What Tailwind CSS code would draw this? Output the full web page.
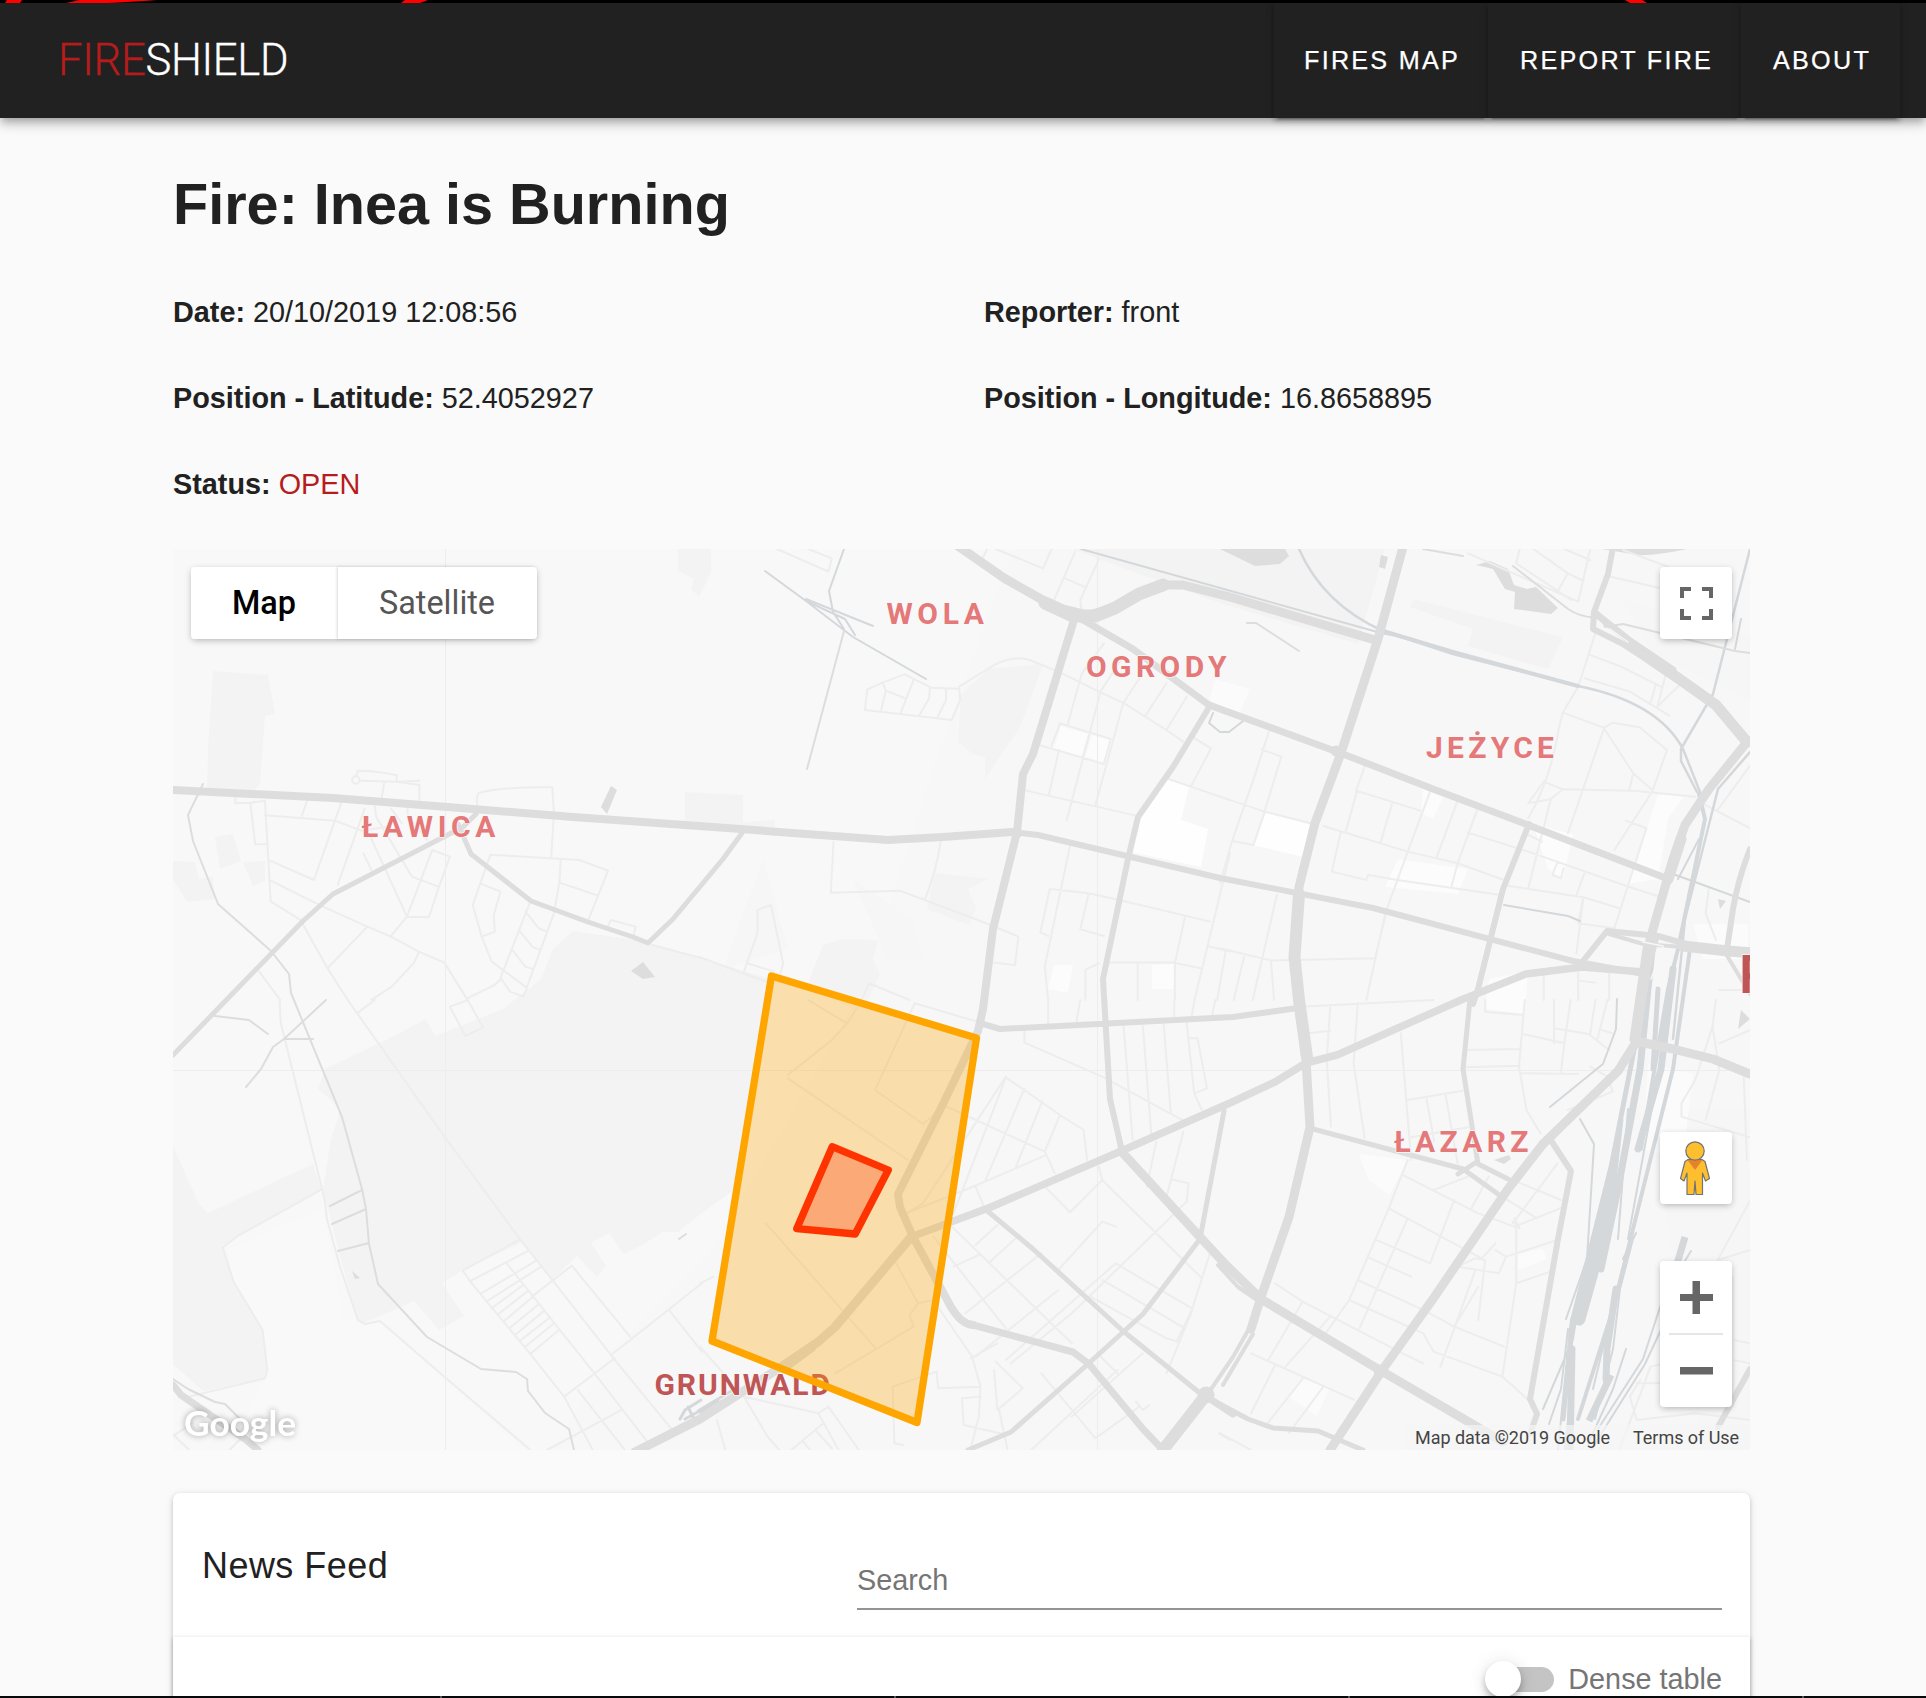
<!DOCTYPE html>
<html lang="en">
<head>
<meta charset="utf-8">
<title>Fireshield</title>
<script src="https://cdn.jsdelivr.net/npm/@tailwindcss/browser@4"></script>
</head>
<body>
<div class="relative w-[1926px] h-[1698px] overflow-hidden bg-[#fafafa] text-[#212121] font-['Liberation_Sans',Arial,sans-serif] flex flex-col">
<div class="h-[3px] shrink-0 bg-black relative z-20">
  <svg class="block" width="1926" height="3" fill="#f00"><path d="M7 0H22L20 3H5ZM80 0H157Q130 2 108 3H66ZM405 0H428L420 3H401ZM1625 0H1642L1647 3H1630Z"/></svg>
</div>
<header class="h-[115px] shrink-0 bg-[#212121] relative z-10 flex items-stretch justify-between pl-[58px] pr-[26px] shadow-[0_4px_7px_-2px_rgba(0,0,0,0.2),0_7px_9px_rgba(0,0,0,0.14),0_2px_18px_rgba(0,0,0,0.12)]">
  <div class="font-[Roboto] font-light text-[43.6px] leading-[115px] tracking-[-0.3px] [-webkit-text-stroke:0.35px_currentColor]"><span class="text-[#b71c1c]">FIRE</span><span class="text-white">SHIELD</span></div>
  <nav class="flex text-white text-[25.2px] leading-[114px] tracking-[2.25px] [-webkit-text-stroke:0.25px_currentColor]">
    <a class="w-[214px] pl-[30px] whitespace-nowrap bg-[#212121] shadow-[0_5px_2px_-4px_rgba(0,0,0,0.3),0_3px_4px_rgba(0,0,0,0.2),0_1px_9px_rgba(0,0,0,0.12)]">FIRES MAP</a>
    <a class="w-[253px] pl-[32px] whitespace-nowrap bg-[#212121] shadow-[0_5px_2px_-4px_rgba(0,0,0,0.3),0_3px_4px_rgba(0,0,0,0.2),0_1px_9px_rgba(0,0,0,0.12)]">REPORT FIRE</a>
    <a class="w-[159px] pl-[32px] whitespace-nowrap bg-[#212121] shadow-[0_5px_2px_-4px_rgba(0,0,0,0.3),0_3px_4px_rgba(0,0,0,0.2),0_1px_9px_rgba(0,0,0,0.12)]">ABOUT</a>
  </nav>
</header>
<main class="ml-[173px] w-[1577px] flex flex-col">
  <h1 class="mt-[51px] h-[70px] text-[57.6px] leading-[70px] font-bold">Fire: Inea is Burning</h1>
  <dl class="mt-[30px] h-[280px] grid grid-cols-[811px_1fr] auto-rows-[86px] text-[28.8px] leading-[86px] whitespace-nowrap">
    <div><b>Date:</b> 20/10/2019 12:08:56</div><div><b>Reporter:</b> front</div>
    <div><b>Position - Latitude:</b> 52.4052927</div><div><b>Position - Longitude:</b> 16.8658895</div>
    <div><b>Status:</b> <span class="text-[#b71c1c]">OPEN</span></div>
  </dl>
  <section class="relative h-[901px] overflow-hidden bg-[#f8f8f8] font-[Roboto]">
    <svg class="block" width="1577" height="901" viewBox="0 0 1577 901" fill="none" stroke-linejoin="round" stroke-linecap="round">
      <!-- built-up ground -->
      <path fill="#f7f7f7" d="M840 0H1577V901H380L440 800L540 700L690 440L760 220Z"/>
      <path fill="#f9f9f9" d="M55 700L150 660L170 770L205 772L350 901H60L90 830L95 800L60 740Z"/>
      <!-- parks -->
      <g fill="#f3f3f3">
        <path d="M40 122L95 126L102 165L92 167L87 235L80 243H34L35 200Z"/>
        <path d="M42 288L60 285L68 312L47 320ZM0 312L22 313L26 330L40 328L42 350L14 353L0 330ZM70 313L92 312V332L80 337Z"/>
        <path d="M505 0H538V24L526 48L518 40L521 30L505 22Z"/>
        <path d="M512 243L570 246V273L602 271V280L512 280Z"/>
        <path d="M788 145L815 120L870 115L852 165L846 180L832 200L812 230V208L800 205L785 193Z"/>
        <path d="M400 382L470 392L598 430L562 640L529 664L505 683L490 683L467 697L451 705L436 684L418 694L433 717L424 728L404 707L379 731L350 693L288 722L269 734L291 767L266 781L241 752L205 768L190 774L184 768L165 700L150 640L158 590L168 560L145 540L152 520L215 490L253 470L262 487L330 460L368 430L380 400Z"/>
        <path d="M0 597L26 655L35 664L140 615L148 640L48 697L62 735L90 780L94 820L90 830L30 842L0 815Z"/>
        <path d="M634 437L650 396L670 390L705 391L700 410L707 425L695 450L680 460Z"/>
        <path d="M762 324L815 330L795 340L803 360L796 376L754 360Z"/>
        <path d="M900 0H1212L1185 95L1050 55L980 30Z"/>
        <path d="M1240 50L1350 78L1390 88L1375 120L1295 97L1300 80L1237 58Z"/>
        <path d="M1450 50L1577 90V150L1480 105ZM1500 560H1577V901H1530L1490 640Z" opacity=".45"/>
      </g>
      <g fill="#f6f6f6"><path d="M590 310L615 400L550 420ZM680 330L740 370L750 410L715 412Z"/></g>
      <!-- squares and public places -->
      <g fill="#fefefe">
        <path d="M994 229L1016 238L1008 271L1035 280L1028 318L958 303L965 267ZM1093 264L1138 276L1130 308L1080 296Z"/>
        <path d="M888 177L915 185L908 207L881 199ZM919 186L939 191L932 215L912 208ZM1250 240L1270 248L1260 270L1248 264ZM1225 310L1295 320L1285 345L1212 338ZM1316 430L1355 422L1352 465L1312 460ZM881 416H900L895 444L875 440ZM979 416L1003 415L1000 440H979ZM1360 275L1400 285L1390 330L1375 320ZM1485 246H1512L1495 270L1485 330L1455 335Z" opacity=".7"/>
        <path d="M1186 605L1235 611L1216 646L1195 630ZM1130 830L1157 838L1144 867L1116 848ZM1345 706L1369 699L1374 710L1345 721ZM1475 515L1520 525L1510 610L1470 600ZM1520 375H1575V410H1530ZM1042 130L1077 140L1066 165L1036 151Z" opacity=".65"/>
      </g>
      <!-- lakes -->
      <g fill="#dddddd">
        <path d="M438 237L444 241L434 265L428 258ZM458 422L470 413L482 428L470 430ZM1047 0H1112L1116 7L1107 15L1082 17ZM1303 16L1317 12L1335 20L1341 36L1354 40L1363 38L1385 59L1378 65L1341 60L1342 43L1332 40L1320 20ZM1208 6L1215 8L1212 20L1206 18ZM1429 0H1514Q1480 7 1465 6ZM1321 611L1336 606L1338 610L1331 615ZM1568 461L1577 470L1565 480ZM1545 350L1553 352L1547 360ZM179 722L187 729L182 730Z"/>
      </g>

      <!-- local streets -->
      <g stroke="#ededed">
        <g transform="translate(-1 -9) scale(.338 .3333)" stroke-width="6">
          <path d="M187 770V790L232 788L275 782L292 1084L380 1140L460 1285L520 1380M232 790L246 913H276M275 826L482 842L420 1020L290 962M400 782L384 828M500 790L482 842L560 872L640 860M288 1020L440 1097L578 1160L648 1190L730 1235L806 1268L872 1376L955 1335L975 1315M460 1285L578 1160M590 1380L650 1340L715 1270L730 1238M570 806L490 1035M600 800L604 830L710 1010L788 1040M578 870L695 1130L760 1132L790 1040L822 950L770 930L695 1130L648 1188M648 806L680 850M697 806V825L755 900M566 940L590 990M620 775L628 730M545 710L550 692Q610 692 665 706V725L732 735V780M555 722L665 725L732 722M904 800Q898 765 910 758Q980 740 1125 742L1130 820L1122 952M912 1030L942 944L1205 960L1290 992L1232 1140M1150 960L1146 1028L1258 1066M1146 1028L1130 1120L1040 1370L1000 1355L972 1313L1058 1090M912 1030L972 1055L952 1125L955 1175L916 1190L890 1095L912 1030M916 1190L946 1265L1045 1340M1046 1115L1085 1165L1110 1175M1026 1170L1066 1220L1088 1230M1006 1228L1045 1280L1070 1288M1290 1160L1298 1140L1372 1160L1366 1185M1420 1215L1568 1255M258 1295L320 1380"/>
          <circle cx="544" cy="720" r="11"/>
        </g>
        <g transform="translate(527 -9) scale(.338 .3333)" stroke-width="6">
          <path d="M228 27L380 95L390 55L320 27M488 510L495 448L540 428L605 403L685 443L767 446L770 480L745 540L488 510M540 428L550 452L536 510M550 452L608 475M632 420L594 518M680 443L678 475L648 527M728 450V480L702 533M767 440L870 375Q930 345 975 360L1065 397L1180 455L1255 490L1380 570L1430 605M850 27L838 50M875 27L1015 85L1040 27M1110 35L1048 178M1180 58L1125 180L1128 205M1080 115L1136 140M1195 310L1130 400L1088 552M1245 360L1185 455L1085 840M1300 415L1252 490L1170 795M1380 430L1318 527M1440 470L1380 570M1040 618L1065 550L1215 597L1195 672L1060 632L985 610M1062 630L1032 765M965 752L1290 827M1455 590L1512 625L1452 740L1380 715M1452 740L1568 780M1095 915L1020 1280L1030 1380M1150 1060L1125 1168L1195 1188M1035 1047L1150 1060L1240 1080L1510 1145M1035 1047L1007 1177L1030 1188M395 905L387 1058L590 1052L665 1080L860 1155L942 1190L932 1275L870 1268M712 905Q700 990 665 1080M1140 1380V1290L1180 1270M1197 1268L1400 1268L1483 1285M1435 1130L1405 1270V1380M1568 940L1463 1380M1500 1218L1568 1235M1555 1235L1530 1380M1295 1268V1380M0 1252L195 1325M130 1295L170 1180V1110L210 1095L246 1270L238 1300M140 1270L220 1295M480 1375L500 1330L620 1380"/>
        </g>
        <g transform="translate(1047 -9) scale(.3444 .3333)" stroke-width="6">
          <path d="M142 575L100 710L35 903L97 915L130 815L265 850M120 628L178 650L130 812M0 770L130 815M35 903L0 1030M165 1065L95 1380M70 1250L40 1380M0 1225L150 1262L450 1255L480 1130M148 1262L157 1380M420 680L395 752L582 812M398 752L365 875M500 790L467 905M610 755L545 935L480 1120L425 1380M690 782L628 955M750 800L690 970L672 1040M300 858L545 935L690 970L825 1020M350 878L325 995L425 1020L430 1005L515 1020L815 1065M720 878L895 935L1180 1038L1270 1068M960 780L895 1045M820 1035L1055 1072L1160 1105M895 885L935 905M895 835Q960 720 985 560L995 518L1040 440L1090 280M995 518L1115 563L1140 548L1218 562L1298 630L1255 755M1115 565L1200 700L1255 750M1115 565L1010 880M940 725L995 748L1200 752L1380 770M995 748L960 778L895 790L940 725M1200 700L1188 750M1255 755L1145 930M1178 842L1238 865L1145 1165L1040 1150L1055 1072L1035 1240M980 965L965 1005L990 1015L998 985M1060 995L1035 1065M720 40L1040 185L1075 27M870 27L860 70L1020 180M910 27L1010 100L980 155M1010 100L1050 120M1000 27L1075 60M1135 110L1280 145M1170 30L1300 80M1075 345L1165 380L1280 440M1058 415L1190 455L1305 527M1295 400L1270 500L1340 430M1265 435L1250 490M1400 790L1540 865M1445 810L1540 675M1420 1040L1410 1120L1440 1200M780 1380M940 1290V1380M1040 1285V1380M1130 1300V1380M1040 1322L1090 1328M1450 1350H1540"/>
        </g>
        <g transform="translate(-1 451) scale(.338 .3333)" stroke-width="6">
          <path d="M318 0L322 70L452 600L458 655L497 800L550 960L570 972L615 963L806 1130L1060 1350M520 0L806 410L1030 718L1125 840L1310 1080L1480 1290M600 0L550 38M822 20L875 0L920 82L868 108L822 20M440 570L195 708L150 742L182 845L268 990L282 1110L275 1135L50 1190M860 812L1030 718M860 812L885 848L1060 1062L1160 1190L1245 1350M885 842L1055 752M915 880L1078 782M930 905L1092 800M990 790L1250 1120L1410 1330M945 925L1035 858M965 943L1050 875M980 965L1068 890M998 985L1082 915M1015 1005L1098 935M1030 1022L1115 955M1043 1042L1130 970M1060 1062L1145 990M1065 890L1183 797L1355 1010M1160 1190L1310 1075M1303 1062L1568 850M1470 930L1568 1055M1110 1350L1330 1230M1200 1170L1340 1350M0 1300L50 1350M0 1310L60 1270M170 1350L230 1290"/>
        </g>
        <g transform="translate(527 451) scale(.338 .3333)" stroke-width="6">
          <path d="M0 850L40 830M0 1040L130 1190L200 1310L235 1350M50 1260L75 1350M130 1190L350 1240L380 1220L470 1350M350 1240L410 1350M270 1350L365 1270M305 1325L325 1350M345 1295L390 1345M320 0L435 70L480 0M435 70L390 120L260 225M635 10L820 65M635 10L518 270L660 372L720 320M260 235L615 480M195 670L520 1045M575 780L645 910L620 945L632 980L400 1120M645 910L690 900M720 315L1020 455L1050 520M905 230L660 610L610 640L820 555L1020 467M905 232L750 640M905 232L1065 345L1135 390L1145 480M960 265L845 540M1012 305L935 500M1065 345L1020 455M960 90V128L1190 230L1430 362M1253 75L1280 420M1310 75L1335 400M1372 75L1393 340M1440 70L1462 280L1500 265L1472 115H1445M1462 280L1485 330M1030 0V70M1125 0L1113 70M1403 0V50M1463 0L1455 48M1525 0L1515 45M1350 425L1322 560M1430 395L1393 540L1380 590M1180 500L1190 540L1095 637L1020 560M1190 540L1485 835M1395 538L1445 550L1440 605L1100 940L920 1090M1515 740L1455 930L1410 1025M745 680L1100 1030M690 710L905 985M815 560L840 620M815 735L880 675M858 785L945 705M785 940L1010 760M815 1070L1060 870M1190 665L1060 810M1190 665L1230 680M1230 790L1455 925M1190 840L1435 985M1155 890L1380 1015L1415 1025M1230 790L905 1080M750 800L825 765M690 900L805 1070L830 1160L825 1250L800 1350M800 1075L880 1030M875 1085L955 1165L880 1230L870 1110M1010 1120L1170 1315L1300 1220M1175 1060L1235 1120M885 1230L910 1350M1100 1250L1310 1060M980 1350L1235 1110M570 1160L700 1115L705 1165L830 1160M570 1160L575 1330L600 1335M830 1190L775 1195L780 1275L910 1305M1290 1205L1310 1230L1330 1215M1535 1300L1568 1320M1455 935L1380 1120"/>
        </g>
        <g transform="translate(1047 451) scale(.3444 .3333)" stroke-width="6">
          <path d="M230 20L620 0M320 20L310 180L322 380M400 10L388 190L420 415M525 100L555 480M255 100L320 92M545 300L705 272M600 298L622 425M655 285L690 490M555 412L720 382M720 150L870 147M715 202L870 197M875 220L1040 222M885 0L868 200L890 330L930 400M770 0V35L880 45M880 102L1000 130L1018 0M970 85L1070 102L1130 150M970 0V130M1090 0L1075 100M1125 0L1095 120M1110 90L1140 100M1000 130L990 215M1075 200L1125 230L1140 275L1010 330M545 480L490 625L375 900L300 1010M530 525L750 640L855 680L1000 620M490 625L760 775L800 730M545 655L405 985M450 718L610 790L680 600M430 772L555 830M400 840L590 930M375 900L590 1000L620 1055L820 1130L895 1200M240 905L140 1080M240 905L530 1060L590 1090M320 950L190 1100M90 1060L390 1200M160 1095L90 1240M245 1130L130 1280M300 1160L200 1300M160 850L240 905M690 800L740 775L770 780L750 960M740 815L640 1100M690 800L810 820L830 770L980 720M850 670L980 490M860 680V850L820 1130M860 850L960 815M800 750L830 770M780 530L730 625M720 530L620 570M850 540L990 600M820 590L920 655M850 665L870 685L855 655M590 930L680 980L825 1040M680 980L750 860M0 1300L90 1350M1440 0L1430 80L1380 240M1430 80L1450 210L1410 360M1450 130L1540 90M1380 240L1340 310V350L1540 412M1520 210L1530 480M1540 600L1445 780L1540 750M1160 1350L1250 1100L1330 1080M1190 1190L1210 1260L1380 1240L1540 1260M1190 1190L1220 1140M1490 830V1220M1490 1020L1540 1030M1490 1080L1540 1090M1210 1150H1280"/>
        </g>
        <path stroke-width="1" d="M272.500 0V901M924.500 0V901M0 521.500H1577"/>
      </g>

      <!-- railways, streams -->
      <g stroke="#d4d8db" stroke-width="2">
        <path d="M592 22L633 52L680 88L753 130M633 50L700 77M635 53L672 70L682 86M671 0L656 42L660 63L671 80M908 0L1058 42L1208 84M1208 84L1240 90"/>
        <path stroke-width="2.500" d="M1126 0Q1150 55 1210 82L1280 105L1405 137Q1485 153 1510 200L1527 243M1508 200V212L1524 243M1577 0L1540 145L1508 200M1577 203L1545 240L1512 370L1500 490"/>
        <path stroke-width="4" d="M1210 82L1280 103L1405 137M1526 245L1532 270L1505 400L1495 440L1468 600M1517 400L1500 520L1440 760L1405 870"/>
        <path d="M1331 356L1395 367L1407 372M1500 325L1577 353M1526 290L1505 330M1444 450L1443 480L1430 515L1377 558M1407 570L1421 595L1414 710L1393 770M1562 100L1568 70M1070 172L1056 183L1047 183L1036 174L1040 164"/>
        <path stroke-width="5" d="M1473 440L1424 690M1485 440L1480 520M1440 610L1400 770L1390 870M1448 570L1440 640L1432 690L1410 760"/>
        <path stroke-width="13" d="M1442 630L1420 720L1406 770"/>
        <path stroke-width="7" d="M1480 390L1467 520L1445 640L1428 720M1500 420L1488 520L1465 600M1443 740L1434 800L1433 830M1399 800L1397 901"/>
        <path d="M1418 700L1407 745L1400 790L1370 860M1395 780L1388 840L1376 875M1398 770L1385 901M1455 560L1445 690M1460 690L1447 740L1440 800L1422 870M1453 800L1440 840L1415 895M1493 740L1470 810L1425 880M1493 770L1472 815L1418 901M1463 684L1450 710M1490 500L1475 580L1455 690M1396 860L1392 901M1518 702L1510 715M1432 790L1420 840"/>
        <path stroke-width="7" d="M1512 688L1504 715M1438 826L1416 872" stroke-linecap="butt"/>
        <path stroke-width="3" d="M507 870L512 861L528 851M512 870L545 852M525 862L565 838M515 858L520 868M528 864L560 846"/>
      </g>
      <g stroke="#dddddd" stroke-width="2">
        <path d="M30 235L15 266L20 292L45 355L98 402L116 425L118 444L169 568L189 640L193 660L196 695L205 735L254 788L308 820L343 823L354 830L355 842L372 864L396 880L401 901M42 467L76 471L95 485M153 451L111 490L100 498L88 520L73 538M112 490H140M157 657L189 641M159 675L193 660M165 702L196 694M671 82L634 220M1074 74L1083 74L1126 102M1250 0L1290 7M1340 17L1395 60Q1410 70 1428 68L1432 78L1450 75L1562 102L1577 104M0 830L15 840L42 853L52 855L72 875M506 690L513 685"/>
      </g>

      <!-- main roads -->
      <g stroke="#dddddd">
        <path stroke-width="8" d="M0 241L160 249L300 260L400 268L540 278L715 291L770 288L839 283"/>
        <path stroke-width="6" d="M839 283L865 286L1047 329L1200 359L1400 412L1465 424"/>
        <path stroke-width="5" d="M303 265L290 278L160 345L130 372L0 506M285 275L298 305L358 352L415 373L460 388L475 394L500 370L550 310L569 284"/>
        <path stroke-width="9" d="M785 -3L831 29L882 58L915 66L939 60L966 45L990 36L1010 36L1057 48L1202 91"/>
        <path stroke-width="13" d="M872 54L900 67L922 67L942 59L966 45L990 36"/>
        <path stroke-width="7" d="M905 68L960 100L1036 156L1110 183L1170 205L1260 240L1350 274L1490 328"/>
        <path stroke-width="8" d="M900 74L860 205L850 225L844 283L820 380L810 460L805 482L770 555L725 645L727 658L740 688L778 758Q788 775 800 776"/>
        <path stroke-width="7" d="M800 776L900 803L916 815L970 880L990 901"/>
        <path stroke-width="6" d="M1035 160L1000 218L965 268L955 310L930 430L937 550L948 598M810 475L827 480L1060 468L1125 459"/>
        <path stroke-width="9" d="M1230 -2L1205 90L1168 204L1142 274L1126 338L1121 408L1125 451L1133 511L1137 578L1116 668L1088 748L1078 780M462 903L527 870L605 820L645 793L662 778L738 688"/>
        <path stroke-width="7.500" d="M738 688L818 658L946 603L1057 554L1102 533L1133 514L1164 506L1288 451L1353 425L1409 418L1470 423"/>
        <path stroke-width="12" d="M1126 345L1121.500 408L1126 451L1134 508"/>
        <path stroke-width="9" d="M948 602L1027 688L1053 716L1088 750L1205 820L1330 893"/>
        <path stroke-width="4" d="M1045 716L1065 738L1090 755M1077 778L1060 808L1034 846M1080 785L1050 836"/>
        <path stroke-width="5" d="M1051 562L1027 690L970 765L915 815L838 883L795 901M812 660L860 700L950 782L1028 845L1075 870L1100 879L1145 882L1190 901M1140 580L1290 620L1325 645M1297 450L1290 520L1305 615L1335 630M1302 614L1285 625M617 817L640 800"/>
        <path stroke-width="9" d="M1574 193L1536 240L1512 276L1500 310L1477 391L1468 450L1462 495L1445 522L1370 595L1335 640L1260 750L1210 820L1157 901"/>
        <path stroke-width="6" d="M1420 -2M1440 -2L1435 25L1421 63L1420 80L1450 95L1500 128M1356 275L1330 340L1305 440L1300 455M1410 412L1434 382L1485 387L1520 397M1377 590L1398 622L1385 690L1357 850L1364 865L1357 885M1577 300Q1565 330 1560 360L1554 400M1577 820L1545 878"/>
        <path stroke-width="7" d="M1422 64L1457 92L1500 121"/>
        <path stroke-width="11" d="M1480 112L1505 129L1543 156L1574 193M1508 290L1495 330M1475 400L1462 490M1510 397L1555 402L1580 404"/>
        <path stroke-width="4" d="M1436 385L1470 395L1510 398M1475 385V430M1484 390L1470 440M1550 400L1577 445"/>
        <path stroke-width="9" d="M1462 492L1500 500L1540 510L1577 525"/>
        <path stroke-width="12" d="M990 901L1033 846"/>
        <circle cx="1033" cy="846" r="8" fill="#dddddd"/>
        <circle cx="1163" cy="202" r="5" fill="#dddddd"/>
        <circle cx="1207" cy="822" r="6" fill="#dddddd"/>
        <circle cx="844" cy="284" r="5" fill="#dddddd"/>
        <path stroke-width="7" d="M0 836L8 846L72 890L85 901M1040 852L1060 865"/>
      </g>
      <g stroke="#f7f7f7" stroke-width="1.500"><path d="M1478 430L1490 398M1490 397L1470 393M1437 80L1455 93"/></g>

      <!-- district labels -->
      <g font-family="Roboto, sans-serif" font-weight="700" font-size="30" fill="#e57878" stroke="#f8f8f8" stroke-width="1.500" paint-order="stroke">
        <text x="713.500" y="74.800" letter-spacing="4.600">WOLA</text>
        <text x="913" y="127.800" letter-spacing="4.400">OGRODY</text>
        <text x="1253" y="208.800" letter-spacing="4.300">JEŻYCE</text>
        <text x="188.500" y="287.800" letter-spacing="4.600">ŁAWICA</text>
        <text x="1221" y="603.300" letter-spacing="4.300">ŁAZARZ</text>
        <g fill="#bf5555">
          <text x="481.500" y="846" letter-spacing="1.900">GRUNWALD</text>
          <text x="1566" y="444" font-size="53" font-weight="600">P</text>
        </g>
      </g>

      <!-- alert zones -->
      <path d="M598.500 427L803.500 489L744 873.500L539 792Z" fill="#ffa500" fill-opacity=".31" stroke="#ffa500" stroke-width="7.300"/>
      <path d="M659.200 597.700L715.300 621L682.200 685L623.700 679.700Z" fill="#ff3300" fill-opacity=".3" stroke="#ff3300" stroke-width="7.300"/>
    </svg>

    <div class="absolute left-[18px] top-[18px] h-[72px] flex text-[32.4px] leading-[72px] rounded-[4px] shadow-[0_2px_7px_-1px_rgba(0,0,0,0.3)]">
      <div class="w-[147px] pl-[41px] bg-white text-black font-medium rounded-l-[4px]">Map</div>
      <div class="w-[199px] pl-[41px] bg-white text-[#565656] rounded-r-[4px] shadow-[-1px_0_3px_rgba(0,0,0,0.15)]">Satellite</div>
    </div>
    <div class="absolute left-[1487px] top-[18px] size-[72px] bg-white rounded-[4px] shadow-[0_2px_7px_-1px_rgba(0,0,0,0.3)]">
      <svg class="block" width="72" height="72" fill="#666"><path d="M20 20H31V24H24V31H20ZM42 20H53V31H49V24H42ZM20 42H24V49H31V53H20ZM49 42H53V53H42V49H49Z"/></svg>
    </div>
    <div class="absolute left-[1487px] top-[583px] size-[72px] bg-white rounded-[4px] shadow-[0_2px_7px_-1px_rgba(0,0,0,0.3)]">
      <svg class="block" width="72" height="72" stroke="#737373" stroke-width="1.200" fill="#fdbf2d" stroke-linejoin="round"><path d="M28 27.500H42L45 29.500L49.500 46.500L45.500 49L42.500 41V62.500H36L35 49L34 62.500H27V41L24 49L20.500 46.500L25 29.500Z"/><path d="M27.500 28H42.500L35 38Z" fill="#e5822b" stroke="none"/><circle cx="35" cy="19" r="9.200"/></svg>
    </div>
    <div class="absolute left-[1487px] top-[712px] w-[72px] h-[146px] bg-white rounded-[4px] shadow-[0_2px_7px_-1px_rgba(0,0,0,0.3)]">
      <svg class="block" width="72" height="146" fill="#666"><path d="M32.500 20H40V33H53V40H40V53H32.500V40H20V33H32.500ZM20 106H53V113.500H20Z"/><path d="M9 72H63V74H9Z" fill="#e6e6e6"/></svg>
    </div>
    <svg class="absolute left-[4px] top-[852px] overflow-visible drop-shadow-[0_0_3px_rgba(0,0,0,0.35)]" width="130" height="49"><text x="7" y="35" font-family="Lato, sans-serif" font-weight="700" font-size="35" fill="#fff" textLength="112" lengthAdjust="spacingAndGlyphs">Google</text></svg>
    <div class="absolute right-0 bottom-0 h-[25px] flex gap-[23px] pl-[11px] pr-[11px] bg-[#f5f5f5]/70 text-[#444] text-[18px] leading-[25px] whitespace-nowrap tracking-[-0.05px]"><span>Map data ©2019 Google</span><span>Terms of Use</span></div>
  </section>

  <section class="mt-[43px] h-[300px] bg-white rounded-t-[7px] shadow-[0_4px_3px_-3px_rgba(0,0,0,0.2),0_2px_4px_rgba(0,0,0,0.14),0_2px_9px_rgba(0,0,0,0.12)]">
    <div class="h-[144px] flex">
      <h2 class="w-[684px] pl-[29px] pt-[49px] text-[36px] leading-[48px] tracking-[0.45px]">News Feed</h2>
      <div class="w-[865px] h-[117px] border-b-2 border-[#949494] pt-[70px] text-[28.8px] leading-[34px] text-[#757575]">Search</div>
    </div>
    <div class="h-[156px] bg-white flex justify-end pr-[28px] shadow-[0_4px_3px_-3px_rgba(0,0,0,0.2),0_2px_4px_rgba(0,0,0,0.14),0_1px_5px_rgba(0,0,0,0.12)]">
      <div class="flex gap-[14px] pt-[24px]">
        <div class="relative w-[69px] h-[36px] flex items-center justify-end"><div class="w-[60px] h-[25px] rounded-full bg-[#c4c4c4]"></div><div class="absolute left-0 top-0 size-[36px] rounded-full bg-white shadow-[0_4px_7px_-2px_rgba(0,0,0,0.2),0_6px_9px_rgba(0,0,0,0.14),0_2px_18px_rgba(0,0,0,0.12)]"></div></div>
        <span class="text-[28.8px] leading-[36px] text-[#757575] whitespace-nowrap">Dense table</span>
      </div>
    </div>
  </section>
</main>
<div class="absolute left-0 top-[1696px] z-30 w-[1926px] h-[2px] bg-[#08080a]">
  <div class="flex justify-between pl-[440px] pr-[122px]"><i class="w-[2px] h-[2px] bg-[#555]"></i><i class="w-[2px] h-[2px] bg-[#555]"></i><i class="w-[2px] h-[2px] bg-[#555]"></i><i class="w-[2px] h-[2px] bg-[#555]"></i></div>
</div>
</div>
</body>
</html>
